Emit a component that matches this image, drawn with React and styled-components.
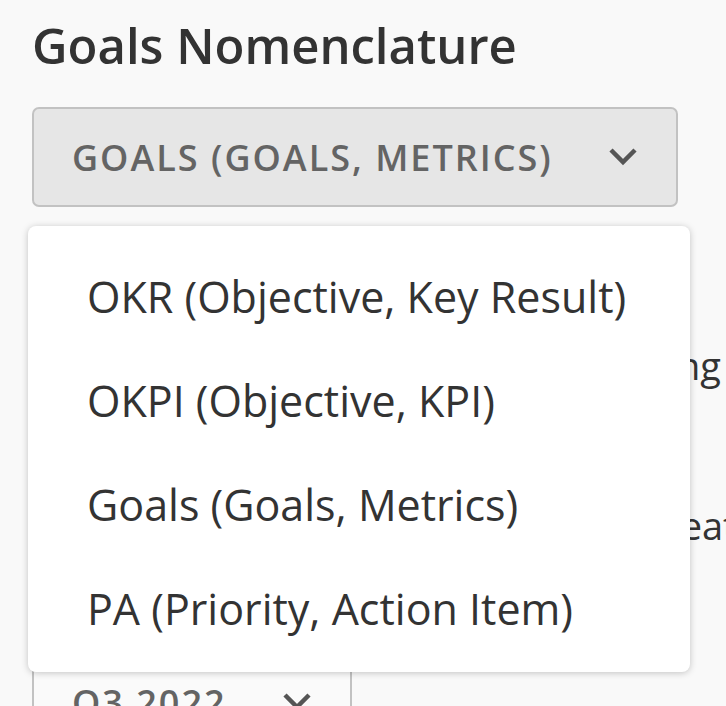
import React from 'react';
import styled, {createGlobalStyle} from 'styled-components';

const GlobalStyle = createGlobalStyle`
  html, body {
    margin: 0;
    padding: 0;
    background: #f9f9f9;
    font-family: "Open Sans", "Liberation Sans", sans-serif;
    overflow: hidden;
  }
`;

const Page = styled.div`
  position: relative;
  width: 726px;
  height: 706px;
  overflow: hidden;
  padding: 14px 0 0 32px;
  box-sizing: border-box;
`;

const Title = styled.h2`
  margin: 0;
  font-size: 49px;
  font-weight: 600;
  color: #333;
  line-height: 62px;
`;

const Select = styled.div`
  margin-top: ${p => p.mt || 0}px;
  width: ${p => p.width}px;
  height: ${p => p.height}px;
  flex-shrink: 0;
  box-sizing: border-box;
  border: 2px solid #c2c2c2;
  border-radius: 7px;
  background: ${p => p.active ? '#e6e6e6' : '#fafafa'};
  display: flex;
  align-items: center;
  justify-content: space-between;
  padding: 0 38px 0 38px;
  color: #646464;
  font-size: 36px;
  font-weight: 600;
  letter-spacing: 2px;
  text-transform: uppercase;
`;

const Chevron = () => (
  <svg width="30" height="20" viewBox="0 0 30 20">
    <path d="M3 3 L15 15 L27 3" fill="none" stroke="#555" strokeWidth="4.5"/>
  </svg>
);

const Behind = styled.div`
  display: flex;
  flex-direction: column;
  padding-top: 123px;
  gap: 90px;
  margin-bottom: 92px;
  white-space: nowrap;
  font-size: 38px;
  color: #333;
`;

const BehindLine = styled.div`
  height: 70px;
  display: flex;
  align-items: center;
  justify-content: flex-end;
  margin-right: ${p => p.shift}px;
`;

const Menu = styled.ul`
  position: absolute;
  top: 226px;
  left: 28px;
  width: 662px;
  height: 446px;
  box-sizing: border-box;
  margin: 0;
  padding: 18px 0 12px;
  list-style: none;
  background: #fff;
  border-radius: 8px;
  box-shadow: 0 1px 7px rgba(0, 0, 0, 0.22);
  display: flex;
  flex-direction: column;
`;

const MenuItem = styled.li`
  height: 104px;
  display: flex;
  align-items: center;
  padding-left: 59px;
  font-size: 43px;
  color: #333;
`;

const options = [
  'OKR (Objective, Key Result)',
  'OKPI (Objective, KPI)',
  'Goals (Goals, Metrics)',
  'PA (Priority, Action Item)',
];

export default function App() {
  return (
    <Page>
      <GlobalStyle/>
      <Title>Goals Nomenclature</Title>
      <Select width={646} height={100} mt={31} active>
        <span>Goals (Goals, Metrics)</span>
        <Chevron/>
      </Select>
      <Behind>
        <BehindLine shift={5}>Quarter starting</BehindLine>
        <BehindLine shift={-32}>Who can create</BehindLine>
      </Behind>
      <Select width={320} height={100}>
        <span>Q3 2022</span>
        <Chevron/>
      </Select>
      <Menu>
        {options.map(o => <MenuItem key={o}>{o}</MenuItem>)}
      </Menu>
    </Page>
  );
}
